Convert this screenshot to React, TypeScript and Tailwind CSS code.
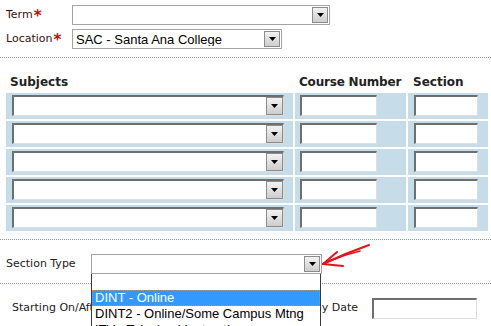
import React from "react";

const SUBJECT_ROWS = [0, 1, 2, 3, 4];

const SECTION_TYPES = [
  { label: "", active: false },
  { label: "DINT - Online", active: true },
  { label: "DINT2 - Online/Some Campus Mtng", active: false },
  { label: "ITV - Televised Instruction", active: false },
];

function Arrow() {
  return (
    <svg width="7" height="4" viewBox="0 0 7 4">
      <path d="M0 0h7L3.5 4z" fill="#000" />
    </svg>
  );
}

function DropButton({ size }: { size: string }) {
  return (
    <span
      className={`flex shrink-0 items-center justify-center border border-[#8c8c8c] bg-linear-to-b from-[#f3f3f3] to-[#cdcdcd] ${size}`}
    >
      <Arrow />
    </span>
  );
}

function FlatSelect({ width, value }: { width: string; value?: string }) {
  return (
    <div
      className={`flex h-[20px] items-center border border-[#a3a3a3] bg-white pl-[3px] pr-[1px] ${width}`}
    >
      <span className="flex-1 truncate font-['Liberation_Sans',Arial,sans-serif] text-[13px] leading-none text-black">
        {value}
      </span>
      <DropButton size="h-[16px] w-[16px]" />
    </div>
  );
}

function InsetSelect() {
  return (
    <div className="flex h-[21px] w-[272px] items-stretch border-t-2 border-l-2 border-b border-r border-t-[#6f6f6f] border-l-[#6f6f6f] border-b-[#dedede] border-r-[#dedede] bg-white">
      <span className="flex-1" />
      <DropButton size="w-[17px] border-[#5a5a5a]" />
    </div>
  );
}

function InsetInput({ width }: { width: string }) {
  return (
    <input
      readOnly
      className={`h-[21px] border-t-2 border-l-2 border-b border-r border-t-[#6f6f6f] border-l-[#6f6f6f] border-b-[#dedede] border-r-[#dedede] bg-white outline-none ${width}`}
    />
  );
}

function Required() {
  return (
    <span className="ml-[1px] mt-[3px] font-bold text-[15px] leading-none text-[#d40000]">*</span>
  );
}

export default function App() {
  return (
    <div className="relative h-[326px] w-[491px] overflow-hidden bg-white font-['DejaVu_Sans',Verdana,sans-serif] text-[11px] text-[#222]">
      <div className="flex flex-col gap-[4px] pl-[6px] pt-[5px]">
        <div className="flex h-[20px] items-center">
          <span className="flex w-[66px] items-center text-[#3b1212]">
            Term
            <Required />
          </span>
          <FlatSelect width="w-[258px]" />
        </div>
        <div className="flex h-[20px] items-center">
          <span className="flex w-[66px] items-center text-[#3b1212]">
            Location
            <Required />
          </span>
          <FlatSelect width="w-[210px]" value="SAC - Santa Ana College" />
        </div>
      </div>

      <div className="mt-[8px] border-t border-dotted border-[#7f9ba8]" />

      <div className="mt-[16px] grid h-[16px] grid-cols-[287px_111px_80px] gap-x-[2px] pl-[6px] text-[12px] font-bold leading-[16px] text-[#222]">
        <span className="pl-[4px]">Subjects</span>
        <span className="pl-[4px] tracking-[-0.2px]">Course Number</span>
        <span className="pl-[5px]">Section</span>
      </div>

      <div className="mt-[3px] grid grid-cols-[287px_111px_80px] gap-[2px] pl-[6px]">
        {SUBJECT_ROWS.map((row) => (
          <React.Fragment key={row}>
            <div className="h-[26px] bg-[#c6dce8] pl-[6px] pt-[2px]">
              <InsetSelect />
            </div>
            <div className="h-[26px] bg-[#c6dce8] pl-[5px] pt-[2px]">
              <InsetInput width="w-[77px]" />
            </div>
            <div className="h-[26px] bg-[#c6dce8] pl-[6px] pt-[2px]">
              <InsetInput width="w-[64px]" />
            </div>
          </React.Fragment>
        ))}
      </div>

      <div className="mt-[8px] border-t border-dotted border-[#7f9ba8]" />

      <div className="mt-[14px] flex h-[20px] items-center pl-[6px]">
        <span className="w-[85px]">Section Type</span>
        <div className="relative z-10">
          <FlatSelect width="w-[231px]" />
          <ul className="absolute left-0 top-full w-[230px] border-x border-[#3a3a3a] bg-white font-['Liberation_Sans',Arial,sans-serif] text-[13px] text-black">
            {SECTION_TYPES.map((item) => (
              <li
                key={item.label || "blank"}
                className={
                  item.active
                    ? "h-[16px] border border-dotted border-[#e08a2a] bg-[#3399ff] pl-[2px] leading-[14px] text-white"
                    : "h-[16px] pl-[3px] leading-[16px]"
                }
              >
                {item.label}
              </li>
            ))}
          </ul>
        </div>
      </div>

      <div className="mt-[9px] border-t border-dotted border-[#7f9ba8]" />

      <div className="mt-[14px] flex items-center pl-[12px]">
        <div className="flex w-[346px] justify-between">
          <span>Starting On/After Date</span>
          <span>Ending By Date</span>
        </div>
        <InsetInput width="ml-[14px] w-[105px]" />
      </div>

      <svg
        className="absolute left-0 top-0 z-20"
        width="491"
        height="326"
        viewBox="0 0 491 326"
        fill="none"
      >
        <path
          d="M369 245 Q346 253 323 264"
          stroke="#e5131b"
          strokeWidth="2"
          strokeLinecap="round"
        />
        <path
          d="M360 251 Q343 255 327 262"
          stroke="#e5131b"
          strokeWidth="1.6"
          strokeLinecap="round"
        />
        <path
          d="M337 252 L323 264 L343 266"
          stroke="#e5131b"
          strokeWidth="2"
          strokeLinecap="round"
          strokeLinejoin="round"
        />
      </svg>
    </div>
  );
}
